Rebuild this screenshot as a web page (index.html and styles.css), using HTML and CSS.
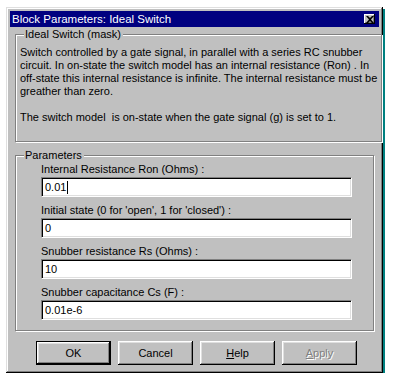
FILE: index.html
```html
<!DOCTYPE html>
<html lang="en">
<head>
    <meta charset="UTF-8">
    <title>Block Parameters: Ideal Switch</title>
    <link rel="stylesheet" href="styles.css">
</head>
<body>
    <div class="window">
        <div class="titlebar">
            <span class="title">Block Parameters: Ideal Switch</span>
            <button class="close" aria-label="Close">
                <svg width="8" height="7" viewBox="0 0 8 7">
                    <path d="M0 0h2l2 2l2-2h2l-3 3.5l3 3.5h-2l-2-2l-2 2h-2l3-3.5z" fill="#000"/>
                </svg>
            </button>
        </div>

        <fieldset class="group mask">
            <legend>Ideal Switch (mask)</legend>
            <p>Switch controlled by a gate signal, in parallel with a series RC snubber<br>
            circuit. In on-state the switch model has an internal resistance (Ron) . In<br>
            off-state this internal resistance is infinite. The internal resistance must be<br>
            greather than zero.</p>
            <p>The switch model &nbsp;is on-state when the gate signal (g) is set to 1.</p>
        </fieldset>

        <fieldset class="group params">
            <legend>Parameters</legend>
            <label>Internal Resistance Ron (Ohms) :</label>
            <div class="field">0.01<span class="caret"></span></div>
            <label>Initial state (0 for 'open', 1 for 'closed') :</label>
            <div class="field">0</div>
            <label>Snubber resistance Rs (Ohms) :</label>
            <div class="field">10</div>
            <label>Snubber capacitance Cs (F) :</label>
            <div class="field">0.01e-6</div>
        </fieldset>

        <div class="buttons">
            <button class="btn default">OK</button>
            <button class="btn">Cancel</button>
            <button class="btn"><u>H</u>elp</button>
            <button class="btn disabled"><u>A</u>pply</button>
        </div>
    </div>
</body>
</html>
```

FILE: styles.css
```css
body {
    margin: 0;
    background: #fff;
    font-family: "Liberation Sans", Arial, sans-serif;
    font-size: 11px;
    color: #000;
}
.window {
    box-sizing: border-box;
    width: 377px;
    height: 366px;
    margin: 7px 0 0 6px;
    padding: 4px;
    background: #c0c0c0;
    box-shadow: inset -1px -1px #000, inset 1px 1px #dfdfdf,
                inset -2px -2px #808080, inset 2px 2px #fff,
                2px 2px 0 #008080;
}
.titlebar {
    display: flex;
    align-items: center;
    justify-content: space-between;
    height: 16px;
    padding: 0 4px 0 2px;
    background: #000080;
    color: #fff;
}
.title {
    font-size: 11.5px;
}
.close {
    display: flex;
    align-items: center;
    justify-content: center;
    width: 11px;
    height: 10px;
    padding: 0;
    border: none;
    background: #c0c0c0;
    box-shadow: inset -1px -1px #000, inset 1px 1px #fff, inset -2px -2px #808080;
}
.group {
    margin: 1px 5px 0 5px;
    padding: 0;
    border: 1px solid #808080;
    box-shadow: inset 1px 1px #fff, 1px 1px 0 #fff;
}
.group legend {
    margin-left: 4px;
    padding: 0 2px 0 1px;
    line-height: 13px;
    background: #c0c0c0;
}
.mask {
    padding: 5px 4px 17px 4px;
}
.mask p {
    margin: 0 0 13px 0;
    line-height: 13px;
    white-space: nowrap;
}
.mask p:last-child {
    margin-bottom: 0;
}
.params {
    display: flex;
    flex-direction: column;
    margin-top: 7px;
    padding: 1px 21px 10px 4px;
}
.params label {
    margin: 0 0 1px 21px;
    line-height: 13px;
}
.field {
    box-sizing: border-box;
    height: 20px;
    margin: 0 0 7px 21px;
    padding: 3px 3px 0 3px;
    background: #fff;
    border-top: 1px solid #808080;
    border-left: 1px solid #808080;
    border-bottom: 1px solid #fff;
    border-right: 1px solid #fff;
    box-shadow: inset 1px 1px #000, inset -1px -1px #dfdfdf;
    line-height: 13px;
}
.field:last-child {
    margin-bottom: 0;
}
.caret {
    display: inline-block;
    width: 1px;
    height: 13px;
    margin-left: 1px;
    vertical-align: top;
    background: #000;
}
.buttons {
    display: flex;
    gap: 7px;
    margin: 10px 0 0 26px;
}
.btn {
    width: 75px;
    height: 24px;
    padding: 0;
    border: none;
    background: #c0c0c0;
    font: inherit;
    color: #000;
    box-shadow: inset -1px -1px #000, inset 1px 1px #fff,
                inset -2px -2px #808080, inset 2px 2px #dfdfdf;
}
.btn.default {
    box-shadow: inset 0 0 0 1px #000, inset -2px -2px #000, inset 2px 2px #fff,
                inset -3px -3px #808080, inset 3px 3px #dfdfdf;
}
.btn.disabled {
    color: #808080;
    text-shadow: 1px 1px 0 #fff;
}
```
